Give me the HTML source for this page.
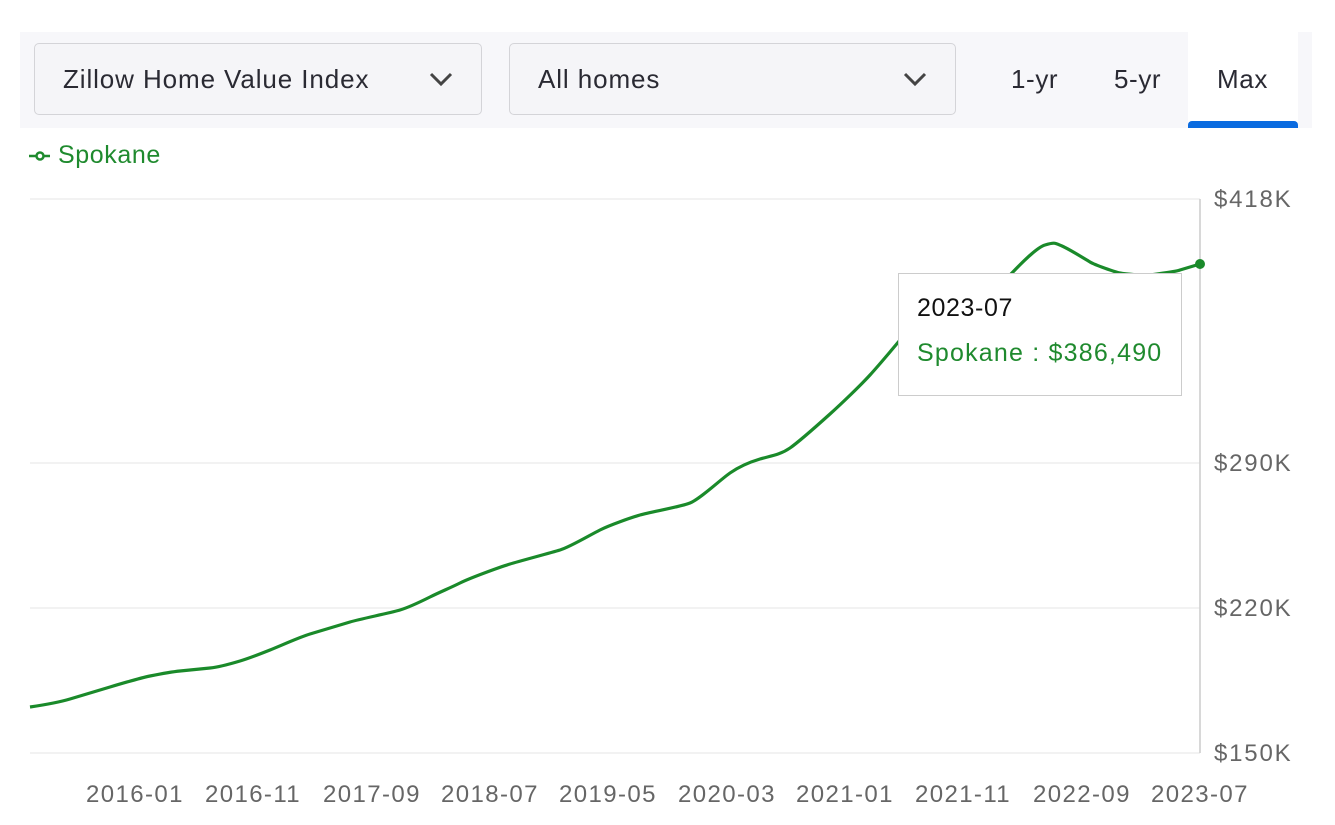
<!DOCTYPE html>
<html><head><style>
body{margin:0;width:1335px;height:825px;background:#fff;font-family:"Liberation Sans",sans-serif;position:relative;overflow:hidden}
.hdr{position:absolute;left:20px;top:32px;width:1292px;height:96px;background:#f7f7fa}
.sel{position:absolute;top:11px;height:72px;border:1px solid #d4d4d8;border-radius:5px;background:#f5f5f8;box-sizing:border-box;font-size:26px;letter-spacing:0.9px;color:#2a2a33;line-height:70px;padding-left:28px}
.tab{position:absolute;font-size:26px;letter-spacing:0.6px;color:#2a2a33;top:31px;line-height:32px}
.max{position:absolute;left:1168px;top:0;width:110px;height:96px;background:#fff}
.ul{position:absolute;left:1168px;top:89px;width:110px;height:7px;background:#0a6be0;border-radius:4px 4px 0 0}
.yl{position:absolute;left:1214px;font-size:24px;letter-spacing:1.8px;color:#666}
.xl{position:absolute;top:781px;font-size:24px;letter-spacing:1.4px;color:#666;transform:translateX(-50%)}
</style></head><body>
<div class="hdr">
<div class="sel" style="left:14px;width:448px">Zillow Home Value Index
<svg style="position:absolute;right:28px;top:27px" width="24" height="16"><path d="M2 3L12 13L22 3" fill="none" stroke="#444" stroke-width="3"/></svg></div>
<div class="sel" style="left:489px;width:447px">All homes
<svg style="position:absolute;right:28px;top:27px" width="24" height="16"><path d="M2 3L12 13L22 3" fill="none" stroke="#444" stroke-width="3"/></svg></div>
<div class="max"></div><div class="ul"></div>
<div class="tab" style="left:991px">1-yr</div>
<div class="tab" style="left:1094px">5-yr</div>
<div class="tab" style="left:1197px">Max</div>
</div>
<div style="position:absolute;left:28px;top:141px;font-size:25px;letter-spacing:0.6px;color:#1f8a2e">
<svg width="24" height="14" style="vertical-align:middle;margin-right:6px"><line x1="1" y1="7" x2="22" y2="7" stroke="#1f8a2e" stroke-width="2.5"/><circle cx="12" cy="7" r="3.5" fill="#fff" stroke="#1f8a2e" stroke-width="2.5"/></svg>Spokane</div>
<svg style="position:absolute;left:0;top:0" width="1335" height="825">
<g stroke="#eee" stroke-width="1.5"><line x1="30" y1="199" x2="1200" y2="199"/><line x1="30" y1="463" x2="1200" y2="463"/><line x1="30" y1="608" x2="1200" y2="608"/><line x1="30" y1="753" x2="1200" y2="753"/></g>
<line x1="1200" y1="199" x2="1200" y2="753" stroke="#ccc" stroke-width="1.5"/>
<path fill="none" stroke="#1a8a2a" stroke-width="3.2" stroke-linejoin="round" d="M30,707 C50,704 60,702 70,699 S100,690 110,687 S140,678 150,676 S170,672 180,671 S200,669 210,668 S230,664 240,661 S260,654 270,650 S300,637 310,634 S340,625 350,622 S390,613 400,610 S420,602 430,597 S450,588 460,583 S500,567 510,564 S550,553 560,550 S590,535 600,530 S630,518 640,515 S680,507 690,503 S720,480 730,473 S750,462 760,459 S780,455 790,448 S820,423 830,414 S860,386 870,375 S895,346 900,340 S935,308 940,303 S975,290 980,287 S1005,280 1010,275 S1035,248 1045,245 S1055,243 1062,246 S1085,259 1090,262 S1115,272 1120,273 S1145,276 1150,275 S1175,272 1180,270 L1200,264"/>
<circle cx="1200" cy="264" r="5" fill="#1a8a2a"/>
</svg>
<div style="position:absolute;left:898px;top:273px;width:284px;height:123px;box-sizing:border-box;border:1.5px solid #ccc;background:#fff">
<div style="position:absolute;left:18px;top:20px;font-size:25px;letter-spacing:0.6px;color:#111">2023-07</div>
<div style="position:absolute;left:18px;top:65px;font-size:25px;letter-spacing:1.2px;color:#1f8a2e">Spokane : $386,490</div>
</div>
<div class="yl" style="top:186px">$418K</div>
<div class="yl" style="top:450px">$290K</div>
<div class="yl" style="top:595px">$220K</div>
<div class="yl" style="top:740px">$150K</div>
<div class="xl" style="left:135px">2016-01</div>
<div class="xl" style="left:253px">2016-11</div>
<div class="xl" style="left:372px">2017-09</div>
<div class="xl" style="left:490px">2018-07</div>
<div class="xl" style="left:608px">2019-05</div>
<div class="xl" style="left:727px">2020-03</div>
<div class="xl" style="left:845px">2021-01</div>
<div class="xl" style="left:963px">2021-11</div>
<div class="xl" style="left:1082px">2022-09</div>
<div class="xl" style="left:1200px">2023-07</div>
</body></html>
